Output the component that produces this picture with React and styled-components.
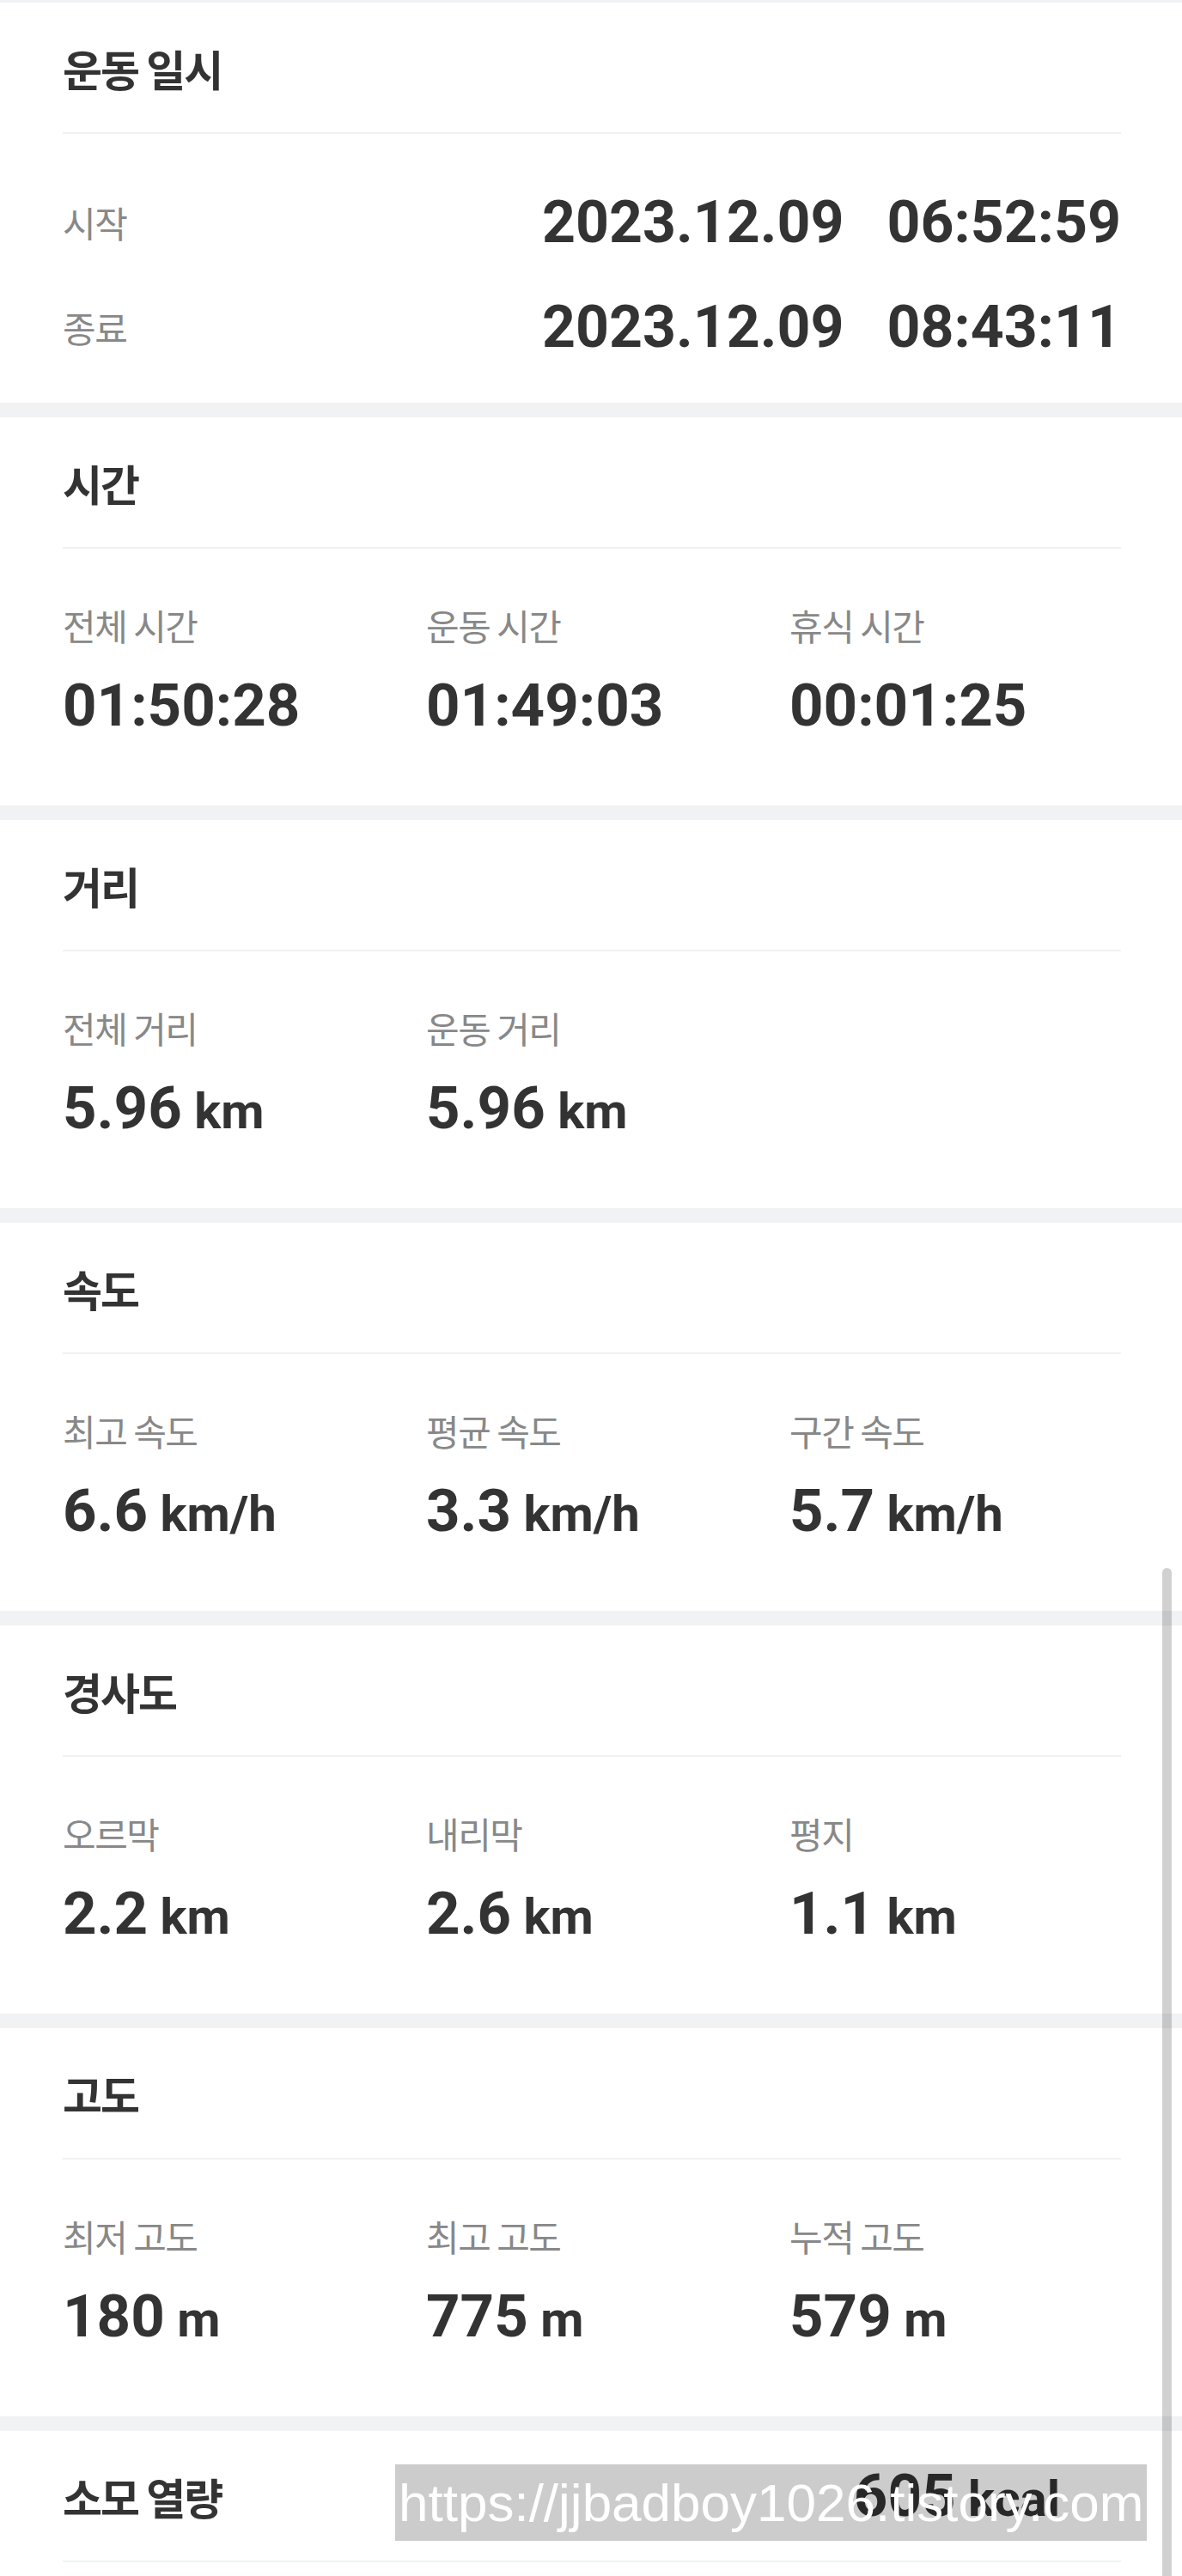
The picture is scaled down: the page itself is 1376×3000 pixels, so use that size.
import React from 'react';
import styled, { createGlobalStyle } from 'styled-components';

const GlobalStyle = createGlobalStyle`
  html, body {
    margin: 0;
    padding: 0;
    background: #f1f2f4;
  }
  * {
    box-sizing: border-box;
  }
`;

const Page = styled.div`
  position: relative;
  width: 1376px;
  padding-top: 3px;
  display: flex;
  flex-direction: column;
  gap: 17px;
  font-family: Roboto, "Noto Sans CJK KR", sans-serif;
  color: #333333;
`;

const Section = styled.section`
  background: #ffffff;
`;

const Header = styled.div`
  height: 151px;
  display: flex;
  align-items: center;
  justify-content: space-between;
  padding: 0 ${(p) => p.$right || 71}px 0 73px;
`;

const Title = styled.h2`
  margin: 0;
  font-family: "Noto Sans CJK KR", sans-serif;
  font-size: 50px;
  font-weight: 700;
  letter-spacing: -2px;
  line-height: 64px;
  color: #333333;
`;

const Divider = styled.div`
  height: 2px;
  margin: 0 71px 0 73px;
  background: #f0f1f3;
`;

const Grid = styled.div`
  display: grid;
  grid-template-columns: repeat(3, 423px);
  padding: 65px 0 76px 73px;
`;

const Stat = styled.div`
  display: flex;
  flex-direction: column;
  gap: 30px;
`;

const Label = styled.span`
  font-family: "Noto Sans CJK KR", sans-serif;
  font-size: 42px;
  font-weight: 400;
  letter-spacing: -1.5px;
  line-height: 48px;
  color: #888888;
  white-space: nowrap;
`;

const Value = styled.span`
  display: block;
  height: 80px;
  font-family: Roboto, "Liberation Sans", sans-serif;
  font-size: 69px;
  font-weight: 700;
  line-height: 80px;
  color: #333333;
  white-space: nowrap;
`;

const Unit = styled.span`
  font-size: 58px;
  line-height: 1;
`;

const Rows = styled.div`
  display: flex;
  flex-direction: column;
  padding: 42px 71px 27px 73px;
`;

const Row = styled.div`
  height: 122px;
  display: flex;
  align-items: center;
  justify-content: space-between;
`;

const DateTime = styled(Value)`
  display: flex;
  gap: 50px;
  font-size: 68px;
`;

const Spacer = styled.div`
  height: 40px;
`;

const Scrollbar = styled.div`
  position: absolute;
  top: 1826px;
  right: 12px;
  width: 11px;
  height: 1200px;
  border-radius: 6px;
  background: rgba(0, 0, 0, 0.18);
`;

const Watermark = styled.div`
  position: absolute;
  left: 460px;
  top: 2870px;
  width: 875px;
  height: 89px;
  background: rgba(0, 0, 0, 0.2);
  color: #ffffff;
  font-family: "Liberation Sans", sans-serif;
  font-size: 62px;
  line-height: 89px;
  white-space: nowrap;
  padding-left: 4px;
`;

const sections = [
  {
    title: '시간',
    stats: [
      { label: '전체 시간', value: '01:50:28' },
      { label: '운동 시간', value: '01:49:03' },
      { label: '휴식 시간', value: '00:01:25' },
    ],
  },
  {
    title: '거리',
    stats: [
      { label: '전체 거리', value: '5.96', unit: 'km' },
      { label: '운동 거리', value: '5.96', unit: 'km' },
    ],
  },
  {
    title: '속도',
    stats: [
      { label: '최고 속도', value: '6.6', unit: 'km/h' },
      { label: '평균 속도', value: '3.3', unit: 'km/h' },
      { label: '구간 속도', value: '5.7', unit: 'km/h' },
    ],
  },
  {
    title: '경사도',
    stats: [
      { label: '오르막', value: '2.2', unit: 'km' },
      { label: '내리막', value: '2.6', unit: 'km' },
      { label: '평지', value: '1.1', unit: 'km' },
    ],
  },
  {
    title: '고도',
    stats: [
      { label: '최저 고도', value: '180', unit: 'm' },
      { label: '최고 고도', value: '775', unit: 'm' },
      { label: '누적 고도', value: '579', unit: 'm' },
    ],
  },
];

const App = () => {
  return (
    <>
      <GlobalStyle />
      <Page>
        <Section>
          <Header>
            <Title>운동 일시</Title>
          </Header>
          <Divider />
          <Rows>
            <Row>
              <Label>시작</Label>
              <DateTime>
                <span>2023.12.09</span>
                <span>06:52:59</span>
              </DateTime>
            </Row>
            <Row>
              <Label>종료</Label>
              <DateTime>
                <span>2023.12.09</span>
                <span>08:43:11</span>
              </DateTime>
            </Row>
          </Rows>
        </Section>

        {sections.map((section) => (
          <Section key={section.title}>
            <Header>
              <Title>{section.title}</Title>
            </Header>
            <Divider />
            <Grid>
              {section.stats.map((stat) => (
                <Stat key={stat.label}>
                  <Label>{stat.label}</Label>
                  <Value>
                    {stat.value}
                    {stat.unit && <Unit> {stat.unit}</Unit>}
                  </Value>
                </Stat>
              ))}
            </Grid>
          </Section>
        ))}

        <Section>
          <Header $right={142}>
            <Title>소모 열량</Title>
            <Value>
              605<Unit> kcal</Unit>
            </Value>
          </Header>
          <Divider />
          <Spacer />
        </Section>

        <Scrollbar />
        <Watermark>https://jjbadboy1026.tistory.com</Watermark>
      </Page>
    </>
  );
};

export default App;
